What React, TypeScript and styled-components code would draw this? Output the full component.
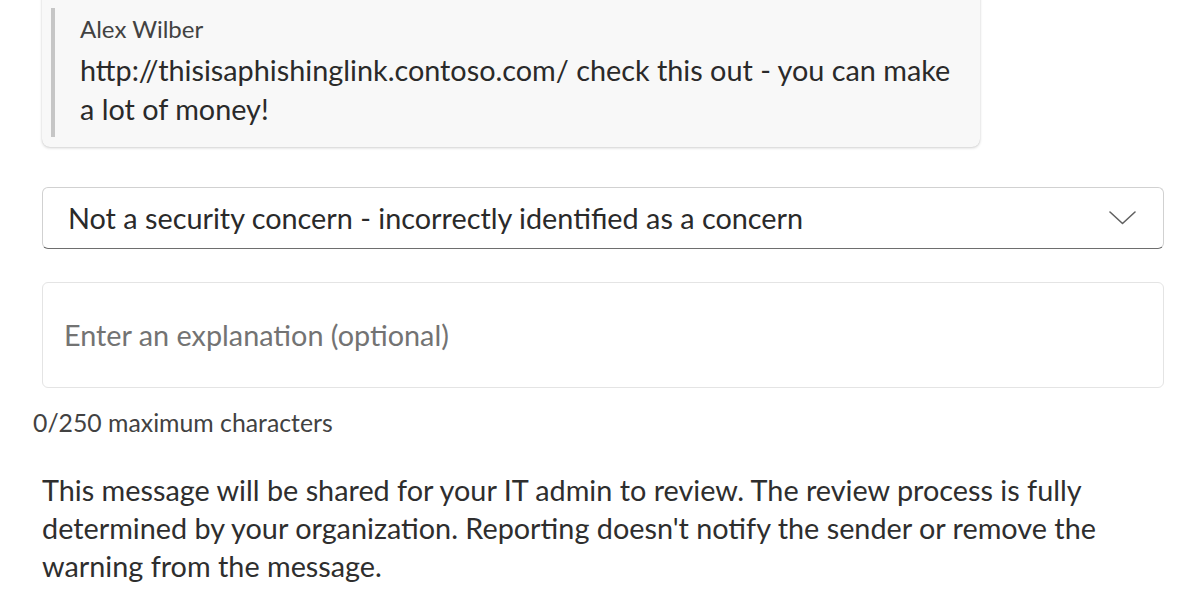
import React from 'react';
import styled, { createGlobalStyle } from 'styled-components';

const GlobalStyle = createGlobalStyle`
  html, body {
    margin: 0;
    padding: 0;
    background: #ffffff;
    overflow: hidden;
  }
  body {
    font-family: Lato, 'Open Sans', sans-serif;
    color: #2a2a2a;
  }
`;

const Page = styled.div`
  width: 1200px;
  height: 600px;
  box-sizing: border-box;
  padding: 0 36px 0 42px;
  display: flex;
  flex-direction: column;
`;

const QuoteCard = styled.div`
  width: 938px;
  margin-top: -10px;
  box-sizing: border-box;
  background: #f8f8f8;
  border-radius: 8px;
  box-shadow: 0 1px 3px rgba(0, 0, 0, 0.18), 0 0 1px rgba(0, 0, 0, 0.14);
  padding: 18px 20px 10px 9px;
`;

const QuoteBody = styled.div`
  border-left: 4px solid #c6c6c6;
  padding: 5px 0 8px 25px;
`;

const Author = styled.div`
  font-size: 24px;
  line-height: 32px;
  margin-bottom: 6px;
  color: #424242;
`;

const Message = styled.div`
  font-size: 28.8px;
  line-height: 39px;
  color: #2a2a2a;
  white-space: nowrap;
`;

const Dropdown = styled.div`
  margin-top: 40px;
  height: 62px;
  box-sizing: border-box;
  border: 1px solid #d1d1d1;
  border-bottom-color: #6e6e6e;
  border-radius: 6px;
  display: flex;
  align-items: center;
  justify-content: space-between;
  padding: 0 27px 0 25px;
  font-size: 28.8px;
  color: #2a2a2a;
`;

const TextArea = styled.div`
  margin-top: 33px;
  height: 106px;
  box-sizing: border-box;
  border: 1px solid #e4e4e4;
  border-radius: 6px;
  display: flex;
  align-items: center;
  padding: 0 21px;
  font-size: 28.8px;
  color: #737373;
`;

const Counter = styled.div`
  margin-top: 20px;
  margin-left: -9px;
  font-size: 24.8px;
  line-height: 30px;
  color: #424242;
`;

const Notice = styled.p`
  margin: 33px 0 0;
  font-size: 28.8px;
  line-height: 38px;
  color: #2e2e2e;
  white-space: nowrap;
`;

const Chevron = () => (
  <svg width="27" height="14" viewBox="0 0 27 14" fill="none">
    <path d="M1 1 L13.5 12.5 L26 1" stroke="#616161" strokeWidth="1.6" strokeLinecap="round" strokeLinejoin="round" />
  </svg>
);

export default function App() {
  return (
    <Page>
      <GlobalStyle />
      <QuoteCard>
        <QuoteBody>
          <Author>Alex Wilber</Author>
          <Message>
            http://thisisaphishinglink.contoso.com/ check this out - you can make
            <br />a lot of money!
          </Message>
        </QuoteBody>
      </QuoteCard>
      <Dropdown>
        <span>Not a security concern - incorrectly identified as a concern</span>
        <Chevron />
      </Dropdown>
      <TextArea>Enter an explanation (optional)</TextArea>
      <Counter>0/250 maximum characters</Counter>
      <Notice>
        This message will be shared for your IT admin to review. The review process is fully
        <br />
        determined by your organization. Reporting doesn't notify the sender or remove the
        <br />
        warning from the message.
      </Notice>
    </Page>
  );
}
